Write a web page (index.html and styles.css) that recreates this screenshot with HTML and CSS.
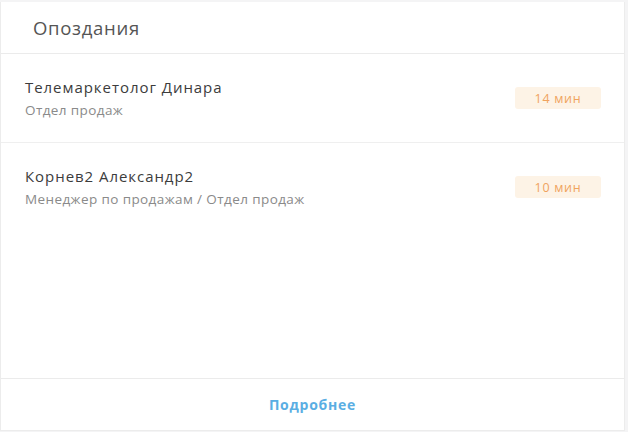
FILE: index.html
```html
<!DOCTYPE html>
<html lang="ru">
<head>
<meta charset="utf-8">
<link rel="stylesheet" href="styles.css">
</head>
<body>
<div class="card">
  <div class="card-header">Опоздания</div>
  <div class="list">
    <div class="row">
      <div class="info">
        <div class="name">Телемаркетолог Динара</div>
        <div class="sub">Отдел продаж</div>
      </div>
      <div class="badge">14 мин</div>
    </div>
    <div class="row">
      <div class="info">
        <div class="name">Корнев2 Александр2</div>
        <div class="sub">Менеджер по продажам / Отдел продаж</div>
      </div>
      <div class="badge">10 мин</div>
    </div>
  </div>
  <div class="card-footer"><a class="more" href="#">Подробнее</a></div>
</div>
</body>
</html>
```
FILE: styles.css
```css
html, body {
  margin: 0;
  padding: 0;
  background: #f4f4f5;
}
body {
  font-family: "Open Sans", "Liberation Sans", sans-serif;
  padding-top: 2px;
}
.card {
  width: 623px;
  height: 428px;
  background: #fff;
  border: 1px solid #ececec;
  border-top: none;
  display: flex;
  flex-direction: column;
}
.card-header {
  height: 51px;
  border-bottom: 1px solid #ebebeb;
  display: flex;
  align-items: center;
  padding-left: 32px;
  font-size: 18.5px;
  color: #555;
  letter-spacing: 0.7px;
}
.list {
  flex: 1;
}
.row {
  height: 88px;
  display: flex;
  align-items: center;
  justify-content: space-between;
  padding: 0 23px 0 24px;
  border-bottom: 1px solid #efefef;
}
.row:last-child {
  border-bottom: none;
}
.info {
  display: flex;
  flex-direction: column;
  gap: 4px;
  margin-top: -1px;
}
.name {
  font-size: 15px;
  color: #3c3c3c;
  letter-spacing: 0.95px;
}
.sub {
  font-size: 13.5px;
  color: #8a8a8a;
  letter-spacing: 0.4px;
}
.badge {
  width: 86px;
  height: 22px;
  display: flex;
  align-items: center;
  justify-content: center;
  background: #fdf3e6;
  color: #f0a35e;
  font-size: 12.5px;
  letter-spacing: 0.7px;
  border-radius: 3px;
}
.card-footer {
  height: 51px;
  border-top: 1px solid #ebebeb;
  display: flex;
  align-items: center;
  justify-content: center;
}
.more {
  color: #5aaee3;
  font-weight: 700;
  font-size: 14px;
  text-decoration: none;
  letter-spacing: 0.75px;
}
```
